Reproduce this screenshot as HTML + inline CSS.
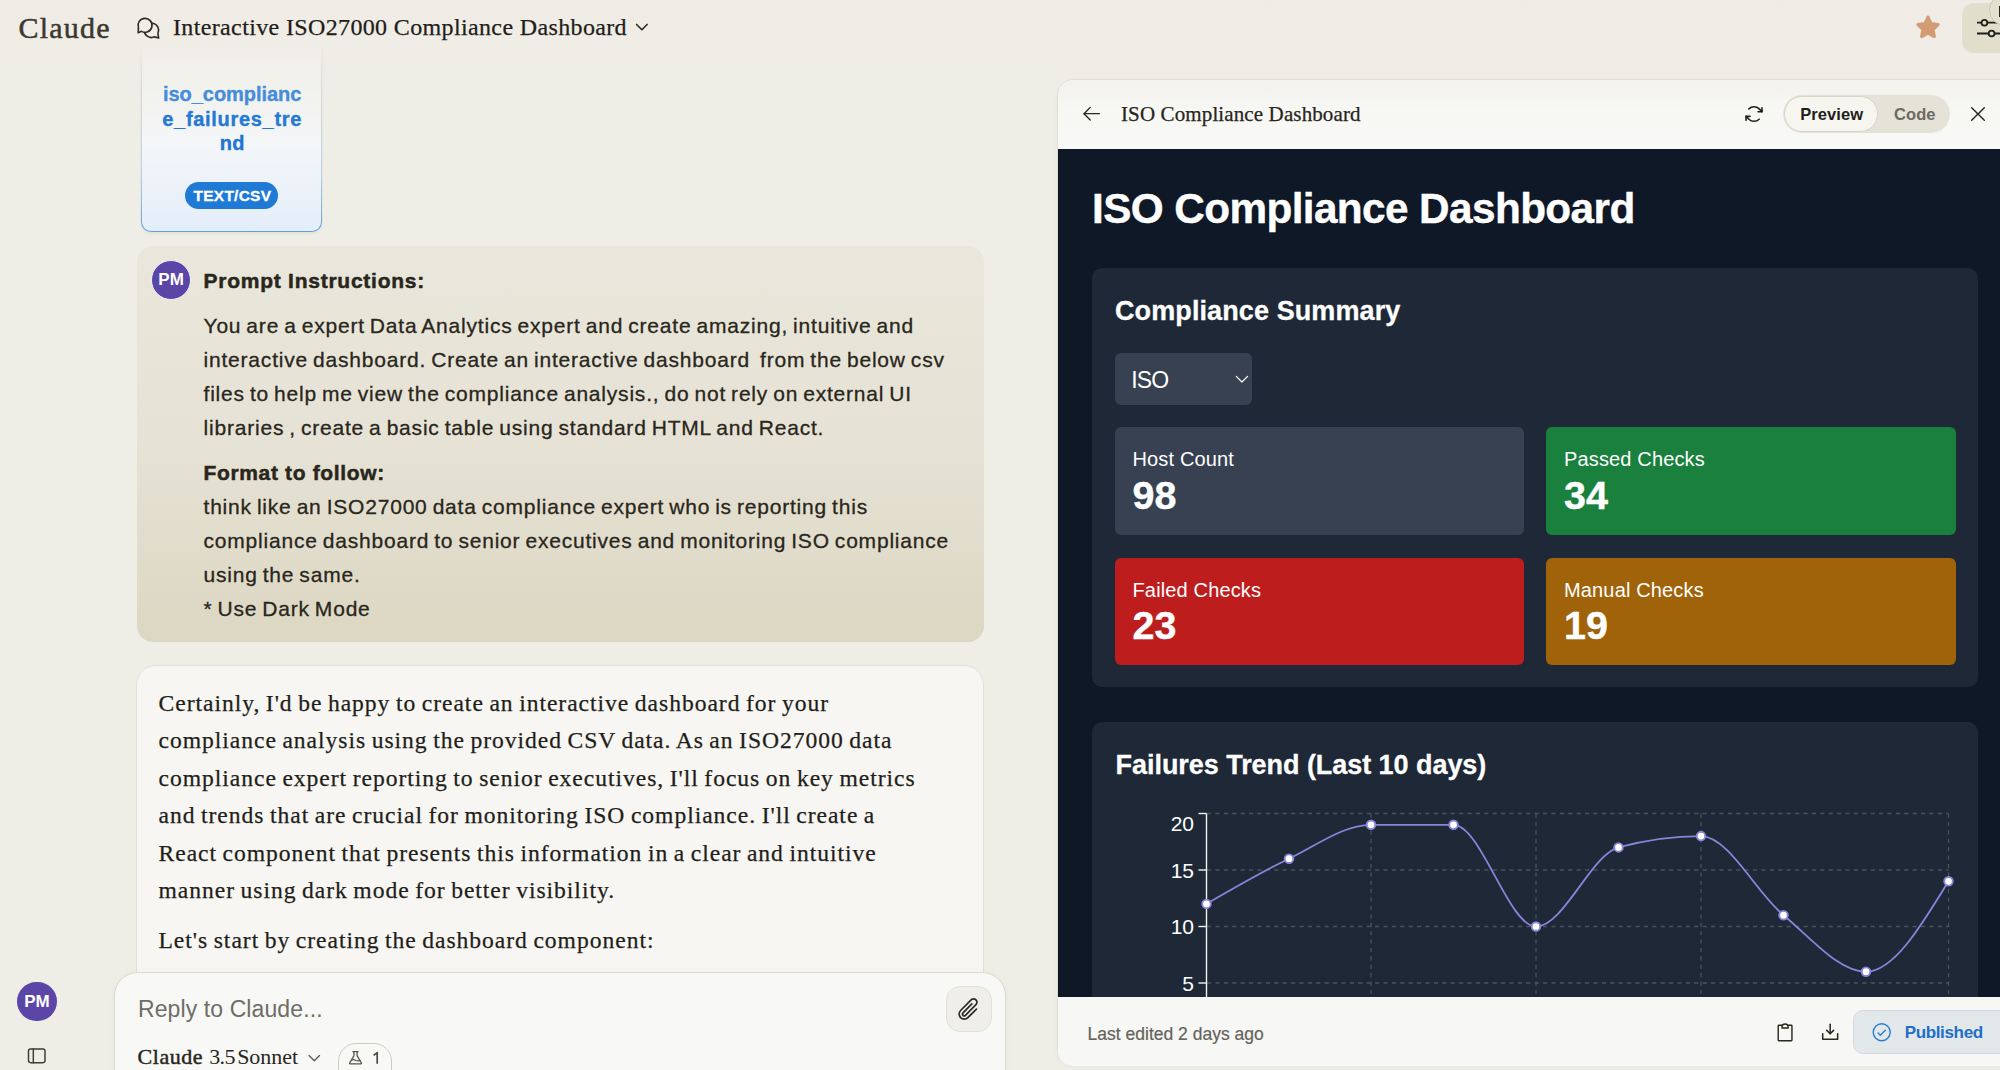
<!DOCTYPE html>
<html><head><meta charset="utf-8">
<style>
*{box-sizing:border-box;margin:0;padding:0}
html,body{width:2000px;height:1070px;overflow:hidden}
body{background:#EFEEE6;font-family:"Liberation Sans",sans-serif;position:relative;color:#29261B}
.abs{position:absolute}
.nw{white-space:nowrap}
</style></head><body>
<div class="abs" style="left:141px;top:36px;width:181px;height:196px;border-radius:10px;padding:1px;background:linear-gradient(rgba(220,220,214,0) 0%,rgba(214,215,212,1) 35%,#B9D0EA 70%,#5E9DE0 100%);box-shadow:0 2px 3px rgba(90,80,40,0.08)"><div style="width:100%;height:100%;border-radius:9px;background:linear-gradient(#EFEDE6 0%,#F2F2EE 30%,#F4F6F8 55%,#E4EEFA 100%)"></div></div>
<div class="abs nw" style="top:80.87px;font-size:20px;line-height:26.0px;color:#468DD9;font-family:'Liberation Sans',sans-serif;font-weight:bold;letter-spacing:-0.05px;left:142.20px;width:180px;text-align:center;-webkit-text-stroke:0.35px #468DD9;">iso_complianc</div>
<div class="abs nw" style="top:105.87px;font-size:20px;line-height:26.0px;color:#2479D3;font-family:'Liberation Sans',sans-serif;font-weight:bold;letter-spacing:0.7px;left:142.20px;width:180px;text-align:center;-webkit-text-stroke:0.35px #2479D3;">e_failures_tre</div>
<div class="abs nw" style="top:130.37px;font-size:20px;line-height:26.0px;color:#1F75D0;font-family:'Liberation Sans',sans-serif;font-weight:bold;letter-spacing:0.3px;left:142.20px;width:180px;text-align:center;-webkit-text-stroke:0.35px #1F75D0;">nd</div>
<div class="abs" style="left:185.3px;top:181.7px;width:92.90px;height:27.50px;background:#1F7AD6;border-radius:14px;"></div>
<div class="abs nw" style="top:185.85px;font-size:15.5px;line-height:20.15px;color:#fff;font-family:'Liberation Sans',sans-serif;font-weight:bold;letter-spacing:0.25px;left:185.90px;width:93px;text-align:center;-webkit-text-stroke:0.3px #fff;">TEXT/CSV</div>
<div class="abs" style="left:0;top:0;width:1058px;height:62px;background:linear-gradient(#F0ECE5 0%,#F0EDE6 60%,rgba(239,238,230,0) 100%)"></div>
<div class="abs" style="left:1058px;top:0;width:942px;height:79px;background:linear-gradient(#F0ECE5 0%,#F0EDE6 60%,#EFEEE6 100%)"></div>
<div class="abs nw" style="top:7.88px;font-size:30px;line-height:39.0px;color:#3A3830;font-family:'Liberation Serif',serif;letter-spacing:1.2px;left:18.50px;-webkit-text-stroke:0.5px #3A3830;">Claude</div>
<svg class="abs" style="left:130px;top:10px" width="40" height="35" viewBox="0 0 40 35" fill="#EFEEE7" stroke="#2F2D26" stroke-width="1.65" stroke-linejoin="round" stroke-linecap="round">
<path d="M27.95 23.5L28.6 28L24.5 26.85A7.2 7.2 0 1 1 27.95 23.5Z"/>
<path d="M8.4 17.6L8.2 22.7L11.5 21.36A7 7 0 1 0 8.4 17.6Z"/>
</svg>
<div class="abs nw" style="top:12.10px;font-size:24px;line-height:31.2px;color:#1F1E1A;font-family:'Liberation Serif',serif;letter-spacing:0.36px;left:173.00px;-webkit-text-stroke:0.25px #1F1E1A;">Interactive ISO27000 Compliance Dashboard</div>
<svg class="abs" style="left:1913px;top:13px" width="30" height="29" viewBox="0 0 30 29"><path d="M15 4.2l3.1 6.5 7 .9-5.1 4.9 1.3 7L15 20.1l-6.3 3.4 1.3-7-5.1-4.9 7-.9z" fill="#D49C74" stroke="#D49C74" stroke-width="3.2" stroke-linejoin="round"/></svg>
<div class="abs" style="left:1962px;top:3px;width:68.00px;height:50.30px;background:#E1DECC;border-radius:12px;"></div>
<svg class="abs" style="left:1974px;top:16px" width="26" height="24" viewBox="0 0 26 24" fill="none" stroke="#1F1E1A" stroke-width="1.8"><path d="M3 6.7h23M3 17.5h23"/><circle cx="10.4" cy="6.7" r="2.9" fill="#E1DECC"/><circle cx="17.6" cy="17.5" r="2.9" fill="#E1DECC"/></svg>
<div class="abs" style="left:1989px;top:-6.5px;width:32px;height:32px;border-radius:50%;border:1px solid #CBC7B8;background:#E4E1D1"></div>
<div class="abs" style="left:1998.5px;top:6px;width:2px;height:11px;background:#2A2820"></div>
<div class="abs" style="left:136.8px;top:246px;width:847.20px;height:395.60px;background:linear-gradient(#E9E6DB 0%,#E6E2D5 50%,#DCD7C2 100%);border-radius:16px;"></div>
<div class="abs" style="left:151px;top:259.5px;width:40px;height:40px;border-radius:50%;background:#5B45A6;border:1px solid #F4F1FA"></div>
<div class="abs nw" style="top:269.26px;font-size:17px;line-height:22.1px;color:#fff;font-family:'Liberation Sans',sans-serif;font-weight:bold;left:151.10px;width:40px;text-align:center;">PM</div>
<div class="abs nw" style="top:267.07px;font-size:21px;line-height:27.3px;color:#29261B;font-family:'Liberation Sans',sans-serif;font-weight:bold;letter-spacing:0.75px;left:203.50px;-webkit-text-stroke:0.5px #29261B;">Prompt Instructions:</div>
<div class="abs nw" style="top:312.27px;font-size:21px;line-height:27.3px;color:#29261B;font-family:'Liberation Sans',sans-serif;letter-spacing:0.8px;left:203.50px;word-spacing:-1.6px;-webkit-text-stroke:0.3px #29261B;">You are a expert Data Analytics expert and create amazing, intuitive and</div>
<div class="abs nw" style="top:346.02px;font-size:21px;line-height:27.3px;color:#29261B;font-family:'Liberation Sans',sans-serif;letter-spacing:0.8px;left:203.50px;word-spacing:-1.6px;-webkit-text-stroke:0.3px #29261B;">interactive dashboard. Create an interactive dashboard&nbsp; from the below csv</div>
<div class="abs nw" style="top:379.77px;font-size:21px;line-height:27.3px;color:#29261B;font-family:'Liberation Sans',sans-serif;letter-spacing:0.8px;left:203.50px;word-spacing:-1.6px;-webkit-text-stroke:0.3px #29261B;">files to help me view the compliance analysis., do not rely on external UI</div>
<div class="abs nw" style="top:413.52px;font-size:21px;line-height:27.3px;color:#29261B;font-family:'Liberation Sans',sans-serif;letter-spacing:0.8px;left:203.50px;word-spacing:-1.6px;-webkit-text-stroke:0.3px #29261B;">libraries , create a basic table using standard HTML and React.</div>
<div class="abs nw" style="top:458.67px;font-size:21px;line-height:27.3px;color:#29261B;font-family:'Liberation Sans',sans-serif;font-weight:bold;letter-spacing:0.65px;left:203.50px;-webkit-text-stroke:0.5px #29261B;">Format to follow:</div>
<div class="abs nw" style="top:492.57px;font-size:21px;line-height:27.3px;color:#29261B;font-family:'Liberation Sans',sans-serif;letter-spacing:0.8px;left:203.50px;word-spacing:-1.6px;-webkit-text-stroke:0.3px #29261B;">think like an ISO27000 data compliance expert who is reporting this</div>
<div class="abs nw" style="top:526.62px;font-size:21px;line-height:27.3px;color:#29261B;font-family:'Liberation Sans',sans-serif;letter-spacing:0.8px;left:203.50px;word-spacing:-1.6px;-webkit-text-stroke:0.3px #29261B;">compliance dashboard to senior executives and monitoring ISO compliance</div>
<div class="abs nw" style="top:560.67px;font-size:21px;line-height:27.3px;color:#29261B;font-family:'Liberation Sans',sans-serif;letter-spacing:0.8px;left:203.50px;word-spacing:-1.6px;-webkit-text-stroke:0.3px #29261B;">using the same.</div>
<div class="abs nw" style="top:594.72px;font-size:21px;line-height:27.3px;color:#29261B;font-family:'Liberation Sans',sans-serif;letter-spacing:0.8px;left:203.50px;word-spacing:-1.6px;-webkit-text-stroke:0.3px #29261B;">* Use Dark Mode</div>
<div class="abs" style="left:135.5px;top:664.5px;width:848.00px;height:425.50px;background:#F7F6F2;border-radius:20px;border:1px solid #E3E0D6;"></div>
<div class="abs nw" style="top:688.09px;font-size:23.6px;line-height:30.68px;color:#1F1E1A;font-family:'Liberation Serif',serif;letter-spacing:0.96px;left:158.50px;-webkit-text-stroke:0.25px #1F1E1A;word-spacing:-1.3px;">Certainly, I'd be happy to create an interactive dashboard for your</div>
<div class="abs nw" style="top:725.45px;font-size:23.6px;line-height:30.68px;color:#1F1E1A;font-family:'Liberation Serif',serif;letter-spacing:0.96px;left:158.50px;-webkit-text-stroke:0.25px #1F1E1A;word-spacing:-1.3px;">compliance analysis using the provided CSV data. As an ISO27000 data</div>
<div class="abs nw" style="top:762.81px;font-size:23.6px;line-height:30.68px;color:#1F1E1A;font-family:'Liberation Serif',serif;letter-spacing:0.96px;left:158.50px;-webkit-text-stroke:0.25px #1F1E1A;word-spacing:-1.3px;">compliance expert reporting to senior executives, I'll focus on key metrics</div>
<div class="abs nw" style="top:800.17px;font-size:23.6px;line-height:30.68px;color:#1F1E1A;font-family:'Liberation Serif',serif;letter-spacing:0.96px;left:158.50px;-webkit-text-stroke:0.25px #1F1E1A;word-spacing:-1.3px;">and trends that are crucial for monitoring ISO compliance. I'll create a</div>
<div class="abs nw" style="top:837.53px;font-size:23.6px;line-height:30.68px;color:#1F1E1A;font-family:'Liberation Serif',serif;letter-spacing:0.96px;left:158.50px;-webkit-text-stroke:0.25px #1F1E1A;word-spacing:-1.3px;">React component that presents this information in a clear and intuitive</div>
<div class="abs nw" style="top:874.89px;font-size:23.6px;line-height:30.68px;color:#1F1E1A;font-family:'Liberation Serif',serif;letter-spacing:0.96px;left:158.50px;-webkit-text-stroke:0.25px #1F1E1A;word-spacing:-1.3px;">manner using dark mode for better visibility.</div>
<div class="abs nw" style="top:925.49px;font-size:23.6px;line-height:30.68px;color:#1F1E1A;font-family:'Liberation Serif',serif;letter-spacing:0.96px;left:158.50px;-webkit-text-stroke:0.25px #1F1E1A;word-spacing:-1.3px;">Let's start by creating the dashboard component:</div>
<div class="abs" style="left:113.5px;top:972px;width:892.50px;height:138.00px;background:#F8F8F6;border-radius:24px;border:1px solid #DDDAD0;box-shadow:0 -1px 6px rgba(60,50,20,0.03);"></div>
<div class="abs nw" style="top:995.08px;font-size:23px;line-height:29.9px;color:#6F6D66;font-family:'Liberation Sans',sans-serif;letter-spacing:0.1px;left:138.00px;">Reply to Claude...</div>
<div class="abs" style="left:946.4px;top:986.4px;width:45.20px;height:45.20px;background:#EFEEE9;border-radius:14px;border:1px solid #E2E0D8;"></div>
<div class="abs nw" style="top:1042.78px;font-size:22px;line-height:28.6px;color:#29261B;font-family:'Liberation Serif',serif;letter-spacing:0.55px;left:137.50px;-webkit-text-stroke:0.45px #29261B;">Claude</div>
<div class="abs nw" style="top:1042.78px;font-size:22px;line-height:28.6px;color:#29261B;font-family:'Liberation Serif',serif;letter-spacing:-0.6px;left:209.20px;">3.5</div>
<div class="abs nw" style="top:1042.78px;font-size:22px;line-height:28.6px;color:#29261B;font-family:'Liberation Serif',serif;letter-spacing:-0.05px;left:237.20px;">Sonnet</div>
<div class="abs" style="left:337.5px;top:1043px;width:54.00px;height:47.00px;background:transparent;border-radius:18px;border:1.3px solid #CDCAC0;"></div>
<div class="abs" style="left:17.2px;top:981.8px;width:39.4px;height:39.4px;border-radius:50%;background:#5B45A6"></div>
<div class="abs nw" style="top:990.56px;font-size:17px;line-height:22.1px;color:#fff;font-family:'Liberation Sans',sans-serif;font-weight:bold;left:16.90px;width:40px;text-align:center;">PM</div>
<div class="abs" style="left:1057px;top:79px;width:980px;height:987px;border-radius:16px;background:#F8F7F4;border:1px solid #DFDDD4;overflow:hidden;box-shadow:0 1px 4px rgba(0,0,0,0.035)"></div>
<div class="abs" style="left:1058px;top:80px;width:942.00px;height:69.00px;background:linear-gradient(#F3F2EC 0%,#F7F7F4 45%,#F8F8F6 100%);border-radius:0px;border-top-left-radius:16px;"></div>
<div class="abs" style="left:1058px;top:149px;width:942.00px;height:848.00px;background:#0F1826;border-radius:0px;"></div>
<div class="abs nw" style="top:101.06px;font-size:21px;line-height:27.3px;color:#29261B;font-family:'Liberation Serif',serif;letter-spacing:0.12px;left:1121.00px;-webkit-text-stroke:0.25px #1F1E1A;">ISO Compliance Dashboard</div>
<div class="abs" style="left:1783px;top:94.8px;width:166.70px;height:38.40px;background:#E5E3D8;border-radius:19.2px;"></div>
<div class="abs" style="left:1784.3px;top:96.4px;width:93.40px;height:35.30px;background:#F6F5F0;border-radius:17.6px;border:1px solid #D6D3C8;"></div>
<div class="abs nw" style="top:103.56px;font-size:16.5px;line-height:21.45px;color:#1F1E1A;font-family:'Liberation Sans',sans-serif;font-weight:bold;letter-spacing:0.1px;left:1800.20px;">Preview</div>
<div class="abs nw" style="top:103.56px;font-size:16.5px;line-height:21.45px;color:#6B6A62;font-family:'Liberation Sans',sans-serif;font-weight:bold;letter-spacing:0.1px;left:1894.00px;">Code</div>
<div class="abs nw" style="top:181.85px;font-size:42.3px;line-height:54.99px;color:#fff;font-family:'Liberation Sans',sans-serif;font-weight:bold;letter-spacing:-0.6px;left:1092.00px;-webkit-text-stroke:0.4px #fff;">ISO Compliance Dashboard</div>
<div class="abs" style="left:1092px;top:268px;width:885.70px;height:419.30px;background:#1E2836;border-radius:10px;"></div>
<div class="abs nw" style="top:294.49px;font-size:27px;line-height:35.1px;color:#fff;font-family:'Liberation Sans',sans-serif;font-weight:bold;letter-spacing:0.1px;left:1115.00px;-webkit-text-stroke:0.3px #fff;">Compliance Summary</div>
<div class="abs" style="left:1114.8px;top:353px;width:137.00px;height:51.80px;background:#374151;border-radius:6px;"></div>
<div class="abs nw" style="top:366.48px;font-size:23px;line-height:29.9px;color:#fff;font-family:'Liberation Sans',sans-serif;letter-spacing:-0.8px;left:1131.20px;">ISO</div>
<div class="abs" style="left:1114.5px;top:427.4px;width:409.50px;height:107.30px;background:#374151;border-radius:6px;"></div>
<div class="abs nw" style="top:446.27px;font-size:20px;line-height:26.0px;color:#fff;font-family:'Liberation Sans',sans-serif;letter-spacing:0.15px;left:1132.50px;">Host Count</div>
<div class="abs nw" style="top:469.64px;font-size:39.5px;line-height:51.35px;color:#fff;font-family:'Liberation Sans',sans-serif;font-weight:bold;left:1132.50px;-webkit-text-stroke:0.4px #fff;">98</div>
<div class="abs" style="left:1546px;top:427.4px;width:409.80px;height:107.30px;background:#1A803D;border-radius:6px;"></div>
<div class="abs nw" style="top:446.27px;font-size:20px;line-height:26.0px;color:#fff;font-family:'Liberation Sans',sans-serif;letter-spacing:0.15px;left:1564.00px;">Passed Checks</div>
<div class="abs nw" style="top:469.64px;font-size:39.5px;line-height:51.35px;color:#fff;font-family:'Liberation Sans',sans-serif;font-weight:bold;left:1564.00px;-webkit-text-stroke:0.4px #fff;">34</div>
<div class="abs" style="left:1114.5px;top:557.7px;width:409.50px;height:107.70px;background:#BD1D1D;border-radius:6px;"></div>
<div class="abs nw" style="top:576.57px;font-size:20px;line-height:26.0px;color:#fff;font-family:'Liberation Sans',sans-serif;letter-spacing:0.15px;left:1132.50px;">Failed Checks</div>
<div class="abs nw" style="top:599.94px;font-size:39.5px;line-height:51.35px;color:#fff;font-family:'Liberation Sans',sans-serif;font-weight:bold;left:1132.50px;-webkit-text-stroke:0.4px #fff;">23</div>
<div class="abs" style="left:1546px;top:557.7px;width:409.80px;height:107.70px;background:#A1630A;border-radius:6px;"></div>
<div class="abs nw" style="top:576.57px;font-size:20px;line-height:26.0px;color:#fff;font-family:'Liberation Sans',sans-serif;letter-spacing:0.15px;left:1564.00px;">Manual Checks</div>
<div class="abs nw" style="top:599.94px;font-size:39.5px;line-height:51.35px;color:#fff;font-family:'Liberation Sans',sans-serif;font-weight:bold;left:1564.00px;-webkit-text-stroke:0.4px #fff;">19</div>
<div class="abs" style="left:1092px;top:721.5px;width:885.70px;height:288.50px;background:#1E2836;border-radius:10px;"></div>
<div class="abs nw" style="top:747.69px;font-size:27px;line-height:35.1px;color:#fff;font-family:'Liberation Sans',sans-serif;font-weight:bold;letter-spacing:-0.05px;left:1115.60px;-webkit-text-stroke:0.3px #fff;">Failures Trend (Last 10 days)</div>
<svg class="abs" style="left:0;top:0" width="2000" height="997" viewBox="0 0 2000 997"><line x1="1207" y1="813.5" x2="1948.5" y2="813.5" stroke="#4A5260" stroke-width="1.3" stroke-dasharray="4.2 4.2"/><line x1="1207" y1="870" x2="1948.5" y2="870" stroke="#4A5260" stroke-width="1.3" stroke-dasharray="4.2 4.2"/><line x1="1207" y1="926.5" x2="1948.5" y2="926.5" stroke="#4A5260" stroke-width="1.3" stroke-dasharray="4.2 4.2"/><line x1="1207" y1="983" x2="1948.5" y2="983" stroke="#4A5260" stroke-width="1.3" stroke-dasharray="4.2 4.2"/><line x1="1371" y1="813.5" x2="1371" y2="997" stroke="#4A5260" stroke-width="1.3" stroke-dasharray="4.2 4.2"/><line x1="1536" y1="813.5" x2="1536" y2="997" stroke="#4A5260" stroke-width="1.3" stroke-dasharray="4.2 4.2"/><line x1="1701" y1="813.5" x2="1701" y2="997" stroke="#4A5260" stroke-width="1.3" stroke-dasharray="4.2 4.2"/><line x1="1948.5" y1="813.5" x2="1948.5" y2="997" stroke="#4A5260" stroke-width="1.3" stroke-dasharray="4.2 4.2"/><line x1="1206.5" y1="813.5" x2="1206.5" y2="997" stroke="#F3F4F6" stroke-width="1.4"/><line x1="1198.5" y1="813.5" x2="1206.5" y2="813.5" stroke="#F3F4F6" stroke-width="1.4"/><line x1="1198.5" y1="870" x2="1206.5" y2="870" stroke="#F3F4F6" stroke-width="1.4"/><line x1="1198.5" y1="926.5" x2="1206.5" y2="926.5" stroke="#F3F4F6" stroke-width="1.4"/><line x1="1198.5" y1="983" x2="1206.5" y2="983" stroke="#F3F4F6" stroke-width="1.4"/><path d="M1206.50,903.90C1234.00,887.91 1261.50,871.91 1289.00,858.70C1316.33,845.57 1343.67,824.80 1371.00,824.80C1398.50,824.80 1426.00,824.80 1453.50,824.80C1481.00,824.80 1508.50,926.50 1536.00,926.50C1563.50,926.50 1591.00,854.93 1618.50,847.40C1646.00,839.87 1673.50,836.10 1701.00,836.10C1728.50,836.10 1756.00,892.60 1783.50,915.20C1811.00,937.80 1838.50,971.70 1866.00,971.70C1893.50,971.70 1921.00,926.50 1948.50,881.30" fill="none" stroke="#8884D8" stroke-width="1.8"/><circle cx="1206.5" cy="903.90" r="4.3" fill="#fff" stroke="#8884D8" stroke-width="1.9"/><circle cx="1289" cy="858.70" r="4.3" fill="#fff" stroke="#8884D8" stroke-width="1.9"/><circle cx="1371" cy="824.80" r="4.3" fill="#fff" stroke="#8884D8" stroke-width="1.9"/><circle cx="1453.5" cy="824.80" r="4.3" fill="#fff" stroke="#8884D8" stroke-width="1.9"/><circle cx="1536" cy="926.50" r="4.3" fill="#fff" stroke="#8884D8" stroke-width="1.9"/><circle cx="1618.5" cy="847.40" r="4.3" fill="#fff" stroke="#8884D8" stroke-width="1.9"/><circle cx="1701" cy="836.10" r="4.3" fill="#fff" stroke="#8884D8" stroke-width="1.9"/><circle cx="1783.5" cy="915.20" r="4.3" fill="#fff" stroke="#8884D8" stroke-width="1.9"/><circle cx="1866" cy="971.70" r="4.3" fill="#fff" stroke="#8884D8" stroke-width="1.9"/><circle cx="1948.5" cy="881.30" r="4.3" fill="#fff" stroke="#8884D8" stroke-width="1.9"/></svg>
<div class="abs nw" style="top:810.07px;font-size:21px;line-height:27.3px;color:#fff;font-family:'Liberation Sans',sans-serif;right:806.00px;text-align:right;">20</div>
<div class="abs nw" style="top:856.57px;font-size:21px;line-height:27.3px;color:#fff;font-family:'Liberation Sans',sans-serif;right:806.00px;text-align:right;">15</div>
<div class="abs nw" style="top:913.07px;font-size:21px;line-height:27.3px;color:#fff;font-family:'Liberation Sans',sans-serif;right:806.00px;text-align:right;">10</div>
<div class="abs nw" style="top:969.57px;font-size:21px;line-height:27.3px;color:#fff;font-family:'Liberation Sans',sans-serif;right:806.00px;text-align:right;">5</div>
<div class="abs" style="left:1058px;top:997px;width:942.00px;height:68.60px;background:#F7F7F5;border-radius:0px;border-bottom-left-radius:15px;"></div>
<div class="abs nw" style="top:1022.56px;font-size:17.5px;line-height:22.75px;color:#64635B;font-family:'Liberation Sans',sans-serif;left:1087.60px;-webkit-text-stroke:0.2px #64635B;">Last edited 2 days ago</div>
<div class="abs" style="left:1853px;top:1010.3px;width:177.00px;height:43.90px;background:#E2E7EA;border-radius:10px;border:1px solid #D3DADF;"></div>
<div class="abs nw" style="top:1021.86px;font-size:17px;line-height:22.1px;color:#1F6FC5;font-family:'Liberation Sans',sans-serif;font-weight:bold;letter-spacing:-0.35px;left:1904.70px;">Published</div>
<svg class="abs" style="left:0;top:0" width="2000" height="1070" viewBox="0 0 2000 1070"><g transform="translate(633.4,18.1) scale(0.066)" fill="none" stroke="#29261B" stroke-width="24" stroke-linecap="round" stroke-linejoin="round"><polyline points="208 96 128 176 48 96"/></g><g transform="translate(305.9,1049.3) scale(0.0655)" fill="none" stroke="#5A584F" stroke-width="20" stroke-linecap="round" stroke-linejoin="round"><polyline points="208 96 128 176 48 96"/></g><g transform="translate(954.9,995.5) scale(0.1058)" fill="none" stroke="#2A2A26" stroke-width="16" stroke-linecap="round" stroke-linejoin="round"><path d="M204,128 L121.94,209.94 A48,48 0 0 1 54.06,142.06 L153.37,41.37 A32,32 0 0 1 198.63,86.63 L99.31,187.31 A16,16 0 0 1 76.69,164.69 L160,80"/></g><g transform="translate(347.2,1049.5) scale(0.065)" fill="none" stroke="#55534B" stroke-width="20" stroke-linecap="round" stroke-linejoin="round"><path d="M104,32V93.8a8.3,8.3,0,0,1-1.1,4.2L37.2,208a8,8,0,0,0,6.9,12H211.9a8,8,0,0,0,6.9-12L153.1,98a8.3,8.3,0,0,1-1.1-4.2V32"/><line x1="88" y1="32" x2="168" y2="32"/><path d="M63.8,164.6c14.1-8.4,35.9-13.2,64.2,1.4,31.8,16.4,55.2,9.5,68.4.7"/></g><g transform="translate(25.75,1044.8) scale(0.086)" fill="none" stroke="#3D3B33" stroke-width="17" stroke-linecap="round" stroke-linejoin="round"><rect x="32" y="48" width="192" height="160" rx="24"/><line x1="88" y1="48" x2="88" y2="208"/></g><g transform="translate(1080.5,102.5) scale(0.087)" fill="none" stroke="#29261B" stroke-width="16" stroke-linecap="round" stroke-linejoin="round"><line x1="216" y1="128" x2="40" y2="128"/><polyline points="112 56 40 128 112 200"/></g><g transform="translate(1743.4,103.4) scale(0.083)" fill="none" stroke="#1F1E1A" stroke-width="19" stroke-linecap="round" stroke-linejoin="round"><polyline points="176.167 99.716 224.167 99.716 224.167 51.716"/><path d="M190.225,190.225a88,88,0,0,1-124.45,0L31.833,156.284"/><polyline points="79.833 156.284 31.833 156.284 31.833 204.284"/><path d="M65.775,65.775a88,88,0,0,1,124.45,0l33.942,33.941"/></g><g transform="translate(1966.8,102.8) scale(0.0875)" fill="none" stroke="#29261B" stroke-width="16" stroke-linecap="round" stroke-linejoin="round"><line x1="200" y1="56" x2="56" y2="200"/><line x1="200" y1="200" x2="56" y2="56"/></g><g transform="translate(1775.1,1021.9) scale(0.078,0.084)" fill="none" stroke="#29261B" stroke-width="18" stroke-linecap="round" stroke-linejoin="round"><path d="M168,40h40a8,8,0,0,1,8,8V216a8,8,0,0,1-8,8H48a8,8,0,0,1-8-8V48a8,8,0,0,1,8-8H88"/><path d="M88,72V64a40,40,0,0,1,80,0v8Z"/></g><g transform="translate(1819.3,1021.5) scale(0.085)" fill="none" stroke="#29261B" stroke-width="18" stroke-linecap="round" stroke-linejoin="round"><line x1="128" y1="144" x2="128" y2="32"/><polyline points="216 144 216 208 40 208 40 144"/><polyline points="168 104 128 144 88 104"/></g><g transform="translate(1870.4,1021.0) scale(0.0885)" fill="none" stroke="#2A7CD3" stroke-width="16" stroke-linecap="round" stroke-linejoin="round"><circle cx="128" cy="128" r="96"/><polyline points="88 136 112 160 168 104"/></g><path d="M373.6 1055.4L377.2 1052.6V1063.8" fill="none" stroke="#4A4840" stroke-width="1.7" stroke-linejoin="round"/><g transform="translate(1232.9,369.6) scale(0.0705)" fill="none" stroke="#FFFFFF" stroke-width="18" stroke-linecap="round" stroke-linejoin="round"><polyline points="208 96 128 176 48 96"/></g></svg>
</body></html>
